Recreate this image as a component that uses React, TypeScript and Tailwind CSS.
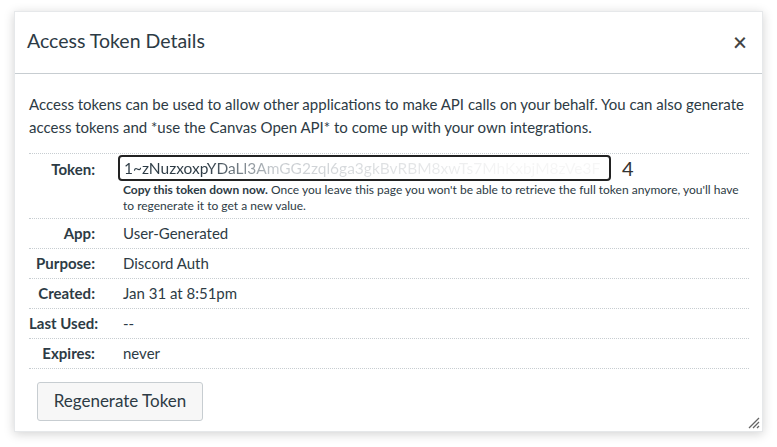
import React from "react";

const rows = [
  { label: "App:", value: "User-Generated" },
  { label: "Purpose:", value: "Discord Auth" },
  { label: "Created:", value: "Jan 31 at 8:51pm" },
  { label: "Last Used:", value: "--" },
  { label: "Expires:", value: "never" },
];

const App = () => {
  return (
    <div className="w-[777px] h-[447px] bg-white pt-[11px] pl-[14px] font-['Lato','Liberation_Sans',sans-serif] text-[#2d3b45]">
      <div className="relative w-[749px] h-[421px] bg-white border border-[#e6e8ea] shadow-[0_2px_10px_rgba(0,0,0,0.18)] flex flex-col">
        {/* header */}
        <div className="h-[62px] flex items-center justify-between pl-[12px] pr-[15px] border-b border-[#c7cdd1]">
          <h2 className="text-[19.5px] leading-none mt-[-3px]">Access Token Details</h2>
          <button className="text-[24px] leading-none text-[#444] font-semibold mt-[-2px]">×</button>
        </div>

        {/* body */}
        <div className="px-[14px] pt-[19px]">
          <p className="text-[15px] leading-[23px] w-[725px]">
            Access tokens can be used to allow other applications to make API calls on your behalf. You can also generate
            access tokens and *use the Canvas Open API* to come up with your own integrations.
          </p>

          <div className="mt-[14px] w-[720px] border-t border-dotted border-[#c7cdd1]">
            <div className="grid grid-cols-[81px_1fr] border-b border-dotted border-[#c7cdd1] h-[65px]">
              <div className="text-right pr-[15px] pt-[4px] text-[15px] font-bold">Token:</div>
              <div className="pl-[8px] pt-[1px]">
                <div className="flex items-center">
                  <div className="w-[493px] h-[26px] border-2 border-[#222] rounded-[4px] px-[4px] flex items-center overflow-hidden whitespace-nowrap">
                    <span className="text-[15.5px] leading-[18px] bg-gradient-to-r from-[#2d3b45] from-[17%] via-[#c9cdd1] via-[32%] to-[#f6f6f6] to-[80%] bg-clip-text text-transparent">
                      1~zNuzxoxpYDaLl3AmGG2zql6ga3gkBvRBM8xwTs7MhKxbjM8zVe3F
                    </span>
                  </div>
                  <span className="ml-[11px] text-[20px] leading-none text-[#333]">4</span>
                </div>
                <p className="pl-[5px] text-[12px] leading-[16px] mt-[1px]">
                  <span className="font-bold">Copy this token down now.</span> Once you leave this page you won't be able to retrieve the full token anymore, you'll have
                  to regenerate it to get a new value.
                </p>
              </div>
            </div>
            {rows.map((r) => (
              <div key={r.label} className="grid grid-cols-[81px_1fr] h-[30px] items-center border-b border-dotted border-[#c7cdd1] text-[15px]">
                <div className="text-right pr-[15px] font-bold whitespace-nowrap">{r.label}</div>
                <div className="pl-[13px]">{r.value}</div>
              </div>
            ))}
          </div>

          <button className="mt-[13px] ml-[8px] w-[166px] h-[39px] rounded-[3px] border border-[#c7cdd1] bg-[#f7f7f7] text-[17px] text-[#2d3b45] pb-[2px]">
            Regenerate Token
          </button>
        </div>

        {/* resize grip */}
        <svg className="absolute right-[2px] bottom-[2px]" width="13" height="13" viewBox="0 0 13 13">
          <path d="M12 2 L2 12 M12 6 L6 12 M12 10 L10 12" stroke="#666" strokeWidth="1.3" />
        </svg>
      </div>
    </div>
  );
};

export default App;
